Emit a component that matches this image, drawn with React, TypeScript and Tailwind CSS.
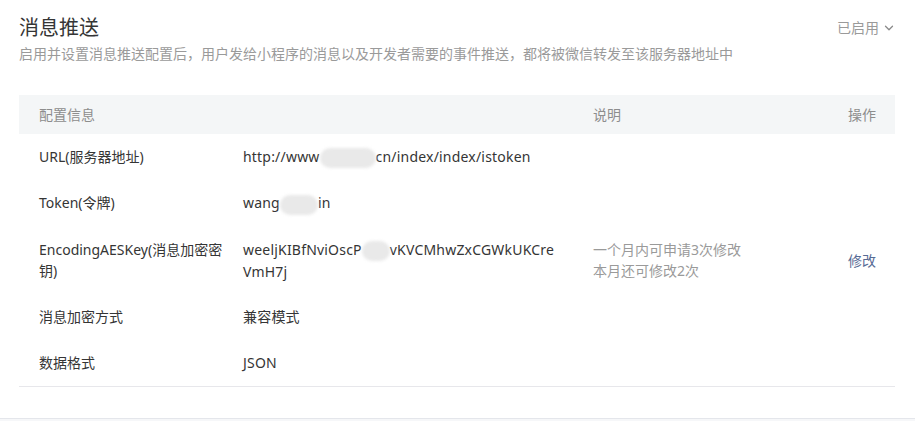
import { ChevronDown } from "lucide-react";

const Blur = ({ w }: { w: string }) => (
  <span
    className={`inline-block h-[20px] ${w} rounded-[10px] bg-[#e9e9e9] align-middle blur-[1.5px]`}
  />
);

const rows = [
  {
    label: <>URL(服务器地址)</>,
    value: (
      <>
        http://www
        <Blur w="w-[56px]" />
        cn/index/index/istoken
      </>
    ),
  },
  {
    label: <>Token(令牌)</>,
    value: (
      <>
        wang
        <Blur w="w-[38px]" />
        in
      </>
    ),
  },
  {
    label: (
      <>
        EncodingAESKey(消息加密密
        <br />
        钥)
      </>
    ),
    value: (
      <>
        weeljKIBfNviOscP
        <Blur w="w-[28px]" />
        vKVCMhwZxCGWkUKCre
        <br />
        VmH7j
      </>
    ),
    desc: (
      <>
        一个月内可申请3次修改
        <br />
        本月还可修改2次
      </>
    ),
    action: "修改",
    tall: true,
  },
  { label: <>消息加密方式</>, value: <>兼容模式</> },
  { label: <>数据格式</>, value: <>JSON</> },
];

const App = () => {
  return (
    // MESSAGE PUSH SETTINGS
    <div className="min-h-screen w-full bg-[#f6f7f9] font-['Noto_Sans','Noto_Sans_CJK_SC',sans-serif] text-[#353535]">
      <div className="bg-white border-b border-[#e4e6eb] px-[19px] pt-[14px] pb-[31px] w-[915px]">
        <div className="flex items-start justify-between">
          <h2 className="text-[20px] leading-[28px] font-normal">消息推送</h2>
          <button className="mt-[3px] flex items-center gap-[3px] text-[14px] leading-[22px] text-[#9a9a9a]">
            已启用
            <ChevronDown className="h-[14px] w-[14px] text-[#8a8a8a]" strokeWidth={2.2} />
          </button>
        </div>
        <p className="mt-[1px] text-[14px] leading-[22px] text-[#9a9a9a]">
          启用并设置消息推送配置后，用户发给小程序的消息以及开发者需要的事件推送，都将被微信转发至该服务器地址中
        </p>

        <div className="mt-[30px] w-[876px] border-b border-[#e7e7eb] text-[14px]">
          <div className="flex h-[39px] items-center bg-[#f4f6f7] text-[#8d8d8d]">
            <div className="w-[204px] pl-[20px]">配置信息</div>
            <div className="w-[350px]" />
            <div className="flex-1 pl-[20px]">说明</div>
            <div className="pr-[19px]">操作</div>
          </div>
          {rows.map((r, i) => (
            <div
              key={i}
              className={`flex items-center ${r.tall ? "py-3 leading-[21px]" : "py-3 leading-[22px]"}`}
            >
              <div className="w-[204px] pl-[20px]">{r.label}</div>
              <div className="w-[350px] pl-[20px] whitespace-nowrap tracking-[0.2px]">{r.value}</div>
              <div className="flex-1 pl-[20px] text-[#9a9a9a]">{r.desc}</div>
              <div className="pr-[19px] text-[#576b95]">{r.action}</div>
            </div>
          ))}
        </div>
      </div>
    </div>
  );
};

export default App;
